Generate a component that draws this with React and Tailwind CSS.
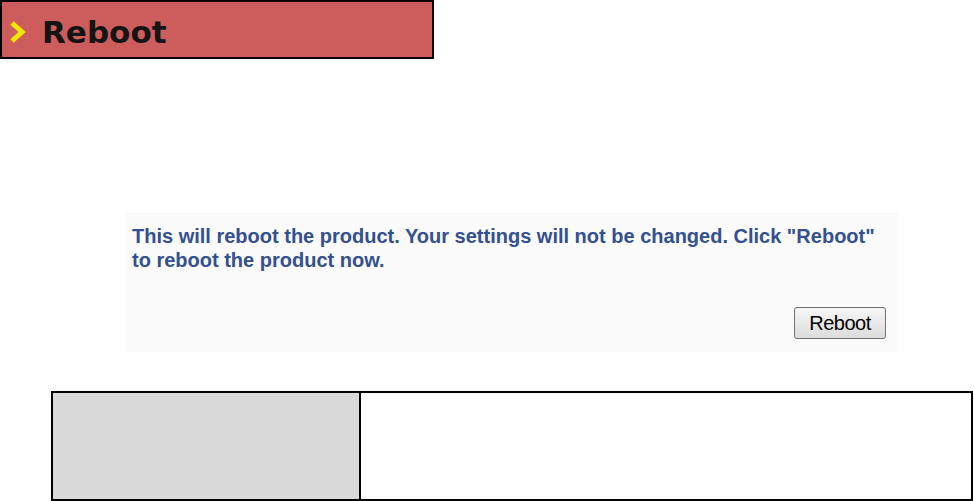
export default function App() {
  return (
    <div className="w-[974px] h-[501px] bg-white overflow-hidden font-['Liberation_Sans',Arial,sans-serif]">
      <div className="w-[434px] h-[59px] bg-[#cd5c5c] border-2 border-black flex items-center pl-[6px]">
        <svg width="18" height="24" viewBox="0 0 18 24" className="mt-[4px]">
          <polyline points="4,3 14,12 4,21" fill="none" stroke="#f0e800" strokeWidth="5" strokeLinejoin="miter" />
        </svg>
        <span className="ml-[16px] mt-[6px] text-[31px] font-bold text-[#141414] font-['DejaVu_Sans',Verdana,sans-serif] leading-none">
          Reboot
        </span>
      </div>

      <div className="ml-[125px] mt-[153px] w-[773px] h-[140px] bg-[#fbfbfb] px-[7px] pt-[12px] flex flex-col">
        <p className="text-[20px] font-bold leading-[24px] text-[#34508f]">
          This will reboot the product. Your settings will not be changed. Click "Reboot" to reboot the product now.
        </p>
        <div className="flex justify-end mt-[35px] pr-[5px]">
          <button className="w-[92px] h-[32px] rounded-[3px] border border-[#707070] bg-gradient-to-b from-[#f6f6f6] to-[#dcdcdc] text-[20px] text-black leading-none tracking-[-0.5px]">
            Reboot
          </button>
        </div>
      </div>

      <div className="ml-[51px] mt-[39px] w-[922px] h-[110px] border-2 border-black flex">
        <div className="w-[308px] h-full bg-[#d9d9d9] border-r-2 border-black" />
        <div className="flex-1 h-full bg-white" />
      </div>
    </div>
  );
}
